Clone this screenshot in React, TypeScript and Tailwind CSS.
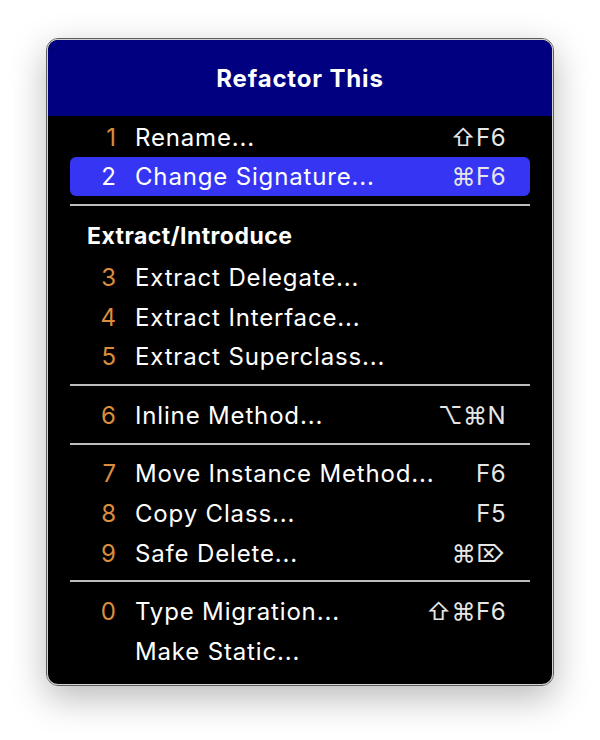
type Item = {
  num?: string;
  label: string;
  keys?: string;
  active?: boolean;
};

const groups: (Item[] | { title: string; items: Item[] })[] = [
  [
    { num: "1", label: "Rename...", keys: "⇧F6" },
    { num: "2", label: "Change Signature...", keys: "⌘F6", active: true },
  ],
  {
    title: "Extract/Introduce",
    items: [
      { num: "3", label: "Extract Delegate..." },
      { num: "4", label: "Extract Interface..." },
      { num: "5", label: "Extract Superclass..." },
    ],
  },
  [{ num: "6", label: "Inline Method...", keys: "⌥⌘N" }],
  [
    { num: "7", label: "Move Instance Method...", keys: "F6" },
    { num: "8", label: "Copy Class...", keys: "F5" },
    { num: "9", label: "Safe Delete...", keys: "⌘⌦" },
  ],
  [
    { num: "0", label: "Type Migration...", keys: "⇧⌘F6" },
    { label: "Make Static..." },
  ],
];

function Row({ item }: { item: Item }) {
  return (
    <div
      className={
        "flex h-[39.6px] items-center rounded-[6px] pt-[2px] pl-[17px] pr-[24px] text-[24px] tracking-[0.035em] " +
        (item.active ? "bg-[#3535f3]" : "")
      }
    >
      <span
        className={
          "mr-[19px] w-[29px] text-right tracking-normal " +
          (item.active ? "text-white" : "text-[#dc8d3c]")
        }
      >
        {item.num}
      </span>
      <span className="text-white">{item.label}</span>
      {item.keys && (
        <span className="ml-auto tracking-[0.02em] text-[#e6e6e6] font-['Inter','DejaVu_Sans',sans-serif]">
          {item.keys}
        </span>
      )}
    </div>
  );
}

function Separator() {
  return <div className="mt-[8px] mb-[9px] h-[2px] bg-[#bdbdbd]" />;
}

export default function App() {
  return (
    <div className="flex h-[740px] w-[600px] justify-center bg-white pt-[38px] font-['Inter','Noto_Sans',sans-serif]">
      <div className="h-[648px] w-[508px] rounded-[12px] border border-[#5f5f5f] shadow-[0_12px_36px_rgba(0,0,0,0.28)]">
        <div className="flex h-full flex-col overflow-hidden rounded-[11px] border border-[#d2d2d2] bg-black">
          <div className="flex h-[76px] shrink-0 items-center justify-center bg-[#000080] pt-[2px] text-[24px] font-bold tracking-[0.035em] text-white">
            Refactor This
          </div>
          <div className="px-[22px] pt-[1px] pb-[15px]">
            {groups.map((g, i) => (
              <div key={i}>
                {i > 0 && <Separator />}
                {Array.isArray(g) ? (
                  g.map((it) => <Row key={it.label} item={it} />)
                ) : (
                  <>
                    <div className="flex h-[42px] items-center pl-[17px] text-[23px] font-bold tracking-[0.02em] text-white">
                      {g.title}
                    </div>
                    {g.items.map((it) => (
                      <Row key={it.label} item={it} />
                    ))}
                  </>
                )}
              </div>
            ))}
          </div>
        </div>
      </div>
    </div>
  );
}
